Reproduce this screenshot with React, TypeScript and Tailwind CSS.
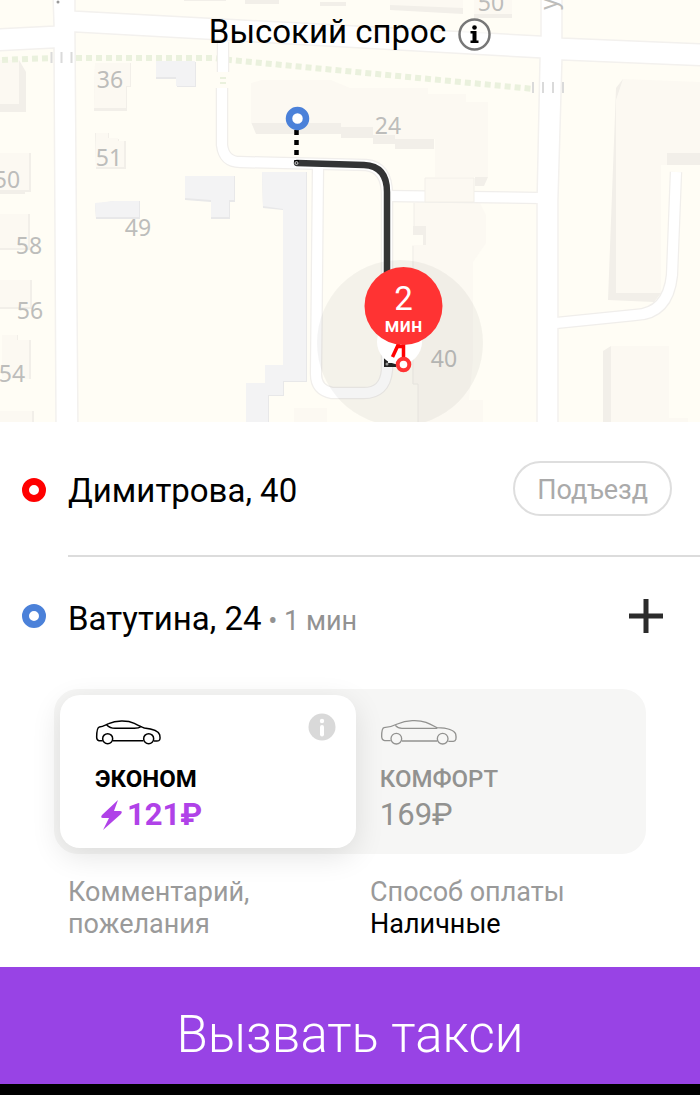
import { useState } from 'react';

const houses = [
  { label: '36', x: 110, y: 88 },
  { label: '51', x: 109, y: 166 },
  { label: '50', x: 7, y: 188 },
  { label: '49', x: 138, y: 236 },
  { label: '58', x: 29, y: 254 },
  { label: '56', x: 30, y: 319 },
  { label: '54', x: 12, y: 382 },
  { label: '24', x: 388, y: 134 },
  { label: '50', x: 491, y: 11 },
  { label: '40', x: 444, y: 367 },
];

const smallRoads = [
  'M223 42V72',
  'M222 88V145Q224 162 240 162L366 165Q387 167 387 195V370Q385 394 362 393H332Q316 390 316 374L318 168',
  'M387 196L540 198',
  'M556 323L635 315Q668 314 672 275L676 172',
];

const mainRoads = [
  'M-5 29L54 26L53 -5H75V11L541 36V-5H562V38L705 44V66L562 60L558 200V430H537V200L540 58L75 32L78 430H56L54 48L-5 51Z',
];

function Map() {
  return (
    <svg
      viewBox="0 0 700 422"
      preserveAspectRatio="xMidYMid slice"
      className="block w-full h-[422px] bg-[#fffdf5]"
      role="img"
      aria-label="Карта"
    >
      {/* walls */}
      <g fill="#f2efe9">
        <path d="M0 60H19L26 72V112H0Z" />
        <path d="M95 63H131V87H127V111H94Z" />
        <path d="M95 133H109V139H119V141H126V169H96Z" />
        <path d="M0 153H31V192H25V194H0Z" />
        <path d="M0 214H30V250H0Z" />
        <path d="M0 280H32V309H0Z" />
        <path d="M2 335H18V340H31V379H2Z" />
        <path d="M0 411H34V422H0Z" />
        <path d="M251 122L256 134H341V138H373V144H395V149H434V122Z" />
        <path d="M475 177H488L484 186H475Z" />
        <path d="M390 4H463V14L390 10Z" />
        <path d="M474 0H512V18H474Z" />
        <path d="M616 88L623 79V293H661L654 302L608 300Z" />
        <path d="M667 153H700V165H667Z" />
        <path d="M603 351L611 346V422H603Z" />
        <path d="M413 226H426V245H423V235H413Z" />
        <path d="M184 0H226V1H184Z" />
        <path d="M245 0H279V4H245ZM320 2H346V6H320Z" />
      </g>
      {/* roofs */}
      <g fill="#fcf9f2">
        <path d="M0 60H19V104H0Z" />
        <path d="M95 63H130V86H126V108H94Z" />
        <path d="M96 133H108V138H118V141H124V167H96Z" />
        <path d="M0 153H29V190H0Z" />
        <path d="M0 214H28V248H0Z" />
        <path d="M0 280H30V307H0Z" />
        <path d="M2 335H17V340H29V379H2Z" />
        <path d="M0 411H32V422H0Z" />
        <path d="M251 83L262 80H331L350 88H422L428 88V94H466V102H488V177H435V139H395V135H373V127H341V123H251Z" />
        <path d="M390 0H463V8L390 5Z" />
        <path d="M474 0H512V14H474Z" />
        <path d="M623 79L700 82V153H667V165H661V293H616V100Z" />
        <path d="M611 346H669V418H688V422H611Z" />
        <path d="M414 203H480L486 215V243L473 262V360L469 400H483V422H418V384H412V245H426V226H414Z" />
        <path d="M294 408H327V422H294Z" />
      </g>
      {/* sheds */}
      <g fill="#e8e8e9">
        <path d="M156 62H196V87H177V79H156Z" />
        <path d="M95 204L114 201H140V219H96Z" />
        <path d="M185 176H235V202H230V219H211V202L185 200Z" />
        <path d="M262 172H307V382H284V396H269V422H246V384H265V365H283V210L263 208Z" />
      </g>
      <g fill="#f3f3f4">
        <path d="M156 61H195V86H176V77H156Z" />
        <path d="M95 203L114 201H139V217H96Z" />
        <path d="M185 176H234V200H229V217H211V200L185 198Z" />
        <path d="M262 172H306V381H283V395H268V422H246V383H265V365H283V209L263 206Z" />
      </g>

      <path d="M2 60L52 58M76 58H213L230 60L534 89" fill="none" stroke="#eaf1dd" strokeWidth="6" strokeDasharray="6 4" />

      <g fill="none" stroke="#f0eeeb" strokeWidth="12.5">
        {smallRoads.map((d) => (
          <path key={d} d={d} />
        ))}
      </g>
      {mainRoads.map((d) => (
        <path key={d} d={d} fill="#fff" stroke="#f3f1ee" strokeWidth="1.5" />
      ))}
      <g fill="none" stroke="#fff" strokeWidth="10">
        {smallRoads.map((d) => (
          <path key={d} d={d} />
        ))}
      </g>
      <path d="M425 178H474V202H425Z" fill="#fcf9f2" stroke="#f2efe9" />
      <path d="M51.500 52V63M61.500 52V63M71.500 52V63M533 82V93M543 82V93M553 82V93M563 82V93" stroke="#dadada" strokeWidth="2" />
      <path d="M220 78H226M220 83H226" stroke="#eaf1dd" strokeWidth="2" />
      <path d="M414 203V226M413 246V384H418V422" fill="none" stroke="#f0eee8" />

      <g fill="#bdbdbb" className="font-['Noto_Sans'] text-[23px]" textAnchor="middle">
        {houses.map(({ label, x, y }) => (
          <text key={`${label}-${x}`} x={x} y={y}>
            {label}
          </text>
        ))}
        <text x="0" y="0" transform="translate(557 4) rotate(-90)">
          у
        </text>
      </g>
      <circle cx="58" cy="2" r="1.500" fill="#999" />

      {/* route */}
      <circle cx="400" cy="343" r="83" fill="#000" fillOpacity="0.045" />
      <path d="M297 163L364 165Q387 166 387 192V285" fill="none" stroke="#333435" strokeWidth="6.500" strokeLinecap="round" />
      <path d="M296.500 130V163" stroke="#000" strokeWidth="4.500" strokeDasharray="5 5" />
      <circle cx="296.500" cy="163" r="1.500" fill="#333" stroke="#eee" strokeWidth="0.800" />
      <circle cx="297.500" cy="118.500" r="8.500" fill="#fff" stroke="#4b81d9" strokeWidth="6.500" />

      {/* pickup pin */}
      <path d="M386 358V365H396" fill="none" stroke="#222" strokeWidth="4" />
      <circle cx="387" cy="364" r="1.500" fill="#999" />
      <circle cx="399.500" cy="342" r="22.500" fill="#fff" />
      <path d="M399 343L392.500 357" stroke="#f00" strokeWidth="3.500" />
      <path d="M396 346.500H403M403.500 340V360" stroke="#f00" strokeWidth="3.500" />
      <circle cx="403.500" cy="364.500" r="5.800" fill="#fff" stroke="#f33" strokeWidth="4" />
      <circle cx="403.500" cy="306" r="39" fill="#f33" />
      <g fill="#fff" textAnchor="middle" className="font-[Roboto]">
        <text x="403.500" y="310" className="text-[33px]">
          2
        </text>
        <text x="403.500" y="332" className="text-[20px] font-medium">
          мин
        </text>
      </g>
    </svg>
  );
}

function Ring({ color }: { color: string }) {
  return (
    <svg viewBox="0 0 24 24" className={`size-6 shrink-0 ${color}`} aria-hidden="true">
      <circle cx="12" cy="12" r="8.500" fill="none" stroke="currentColor" strokeWidth="7" />
    </svg>
  );
}

function EconomyCar() {
  return (
    <svg viewBox="0 0 201 78" className="w-[67px] h-[26px]" fill="none" stroke="currentColor" strokeWidth="4.500" strokeLinejoin="round" aria-hidden="true">
      <path d="M23 65H12Q5 64 5 55C5 37 8 25 13 24C25 23 31 18 41 14C62 4 97 3 118 13C132 20 140 24 148 27C174 30 190 35 194 47C197 62 194 66 186 66H177M54 65H145" />
      <path d="M35 18C44 27 50 28 60 28H118C128 28 134 26 139 22" />
      <circle cx="38" cy="59" r="15" />
      <circle cx="161" cy="59" r="15" />
    </svg>
  );
}

function ComfortCar() {
  return (
    <svg viewBox="0 0 234 78" className="w-[78px] h-[26px]" fill="none" stroke="currentColor" strokeWidth="4" strokeLinejoin="round" aria-hidden="true">
      <path d="M32 65H14Q5 64 5 52C5 37 8 27 12 26C30 25 40 21 52 15C80 3 115 2 138 10C153 16 163 22 171 26C202 27 222 33 227 45C230 60 228 66 220 67H205M66 66H172" />
      <path d="M46 19C54 28 59 28 66 28H172" />
      <circle cx="49" cy="59" r="16" />
      <circle cx="188" cy="59" r="16" />
    </svg>
  );
}

export default function App() {
  const [tariff, setTariff] = useState('econom');

  const cardStyle = (name: string) =>
    tariff === name
      ? 'bg-white text-black shadow-[0_8px_30px_rgba(0,0,0,0.11)]'
      : 'text-[#929290]';

  return (
    <div className="min-h-screen flex flex-col bg-white text-black font-[Roboto,sans-serif]">
      <header className="relative">
        <Map />
        <div className="absolute inset-x-0 top-3 flex items-center justify-center gap-3">
          <h1 className="text-[33px] leading-10">Высокий спрос</h1>
          <button type="button" aria-label="О спросе" className="mt-1">
            <svg viewBox="0 0 33 33" className="size-[33px]" aria-hidden="true">
              <circle cx="16.500" cy="16.500" r="15" fill="#fff" fillOpacity="0.5" stroke="#777" strokeWidth="2.500" />
              <circle cx="16.500" cy="9.500" r="2.300" />
              <path d="M12.500 13H18.500V22.500H20.500V25H12.500V22.500H14.500V15.500H12.500Z" />
            </svg>
          </button>
        </div>
      </header>

      <main className="grow flex flex-col">
        <section className="pl-[22px]">
          <div className="flex items-center">
            <Ring color="text-[#f00]" />
            <div className="ml-[22px] grow flex items-center justify-between h-[135px] pr-7 border-b-2 border-[#dcdcdc]">
              <p className="pt-1 text-[33px] leading-10">Димитрова, 40</p>
              <button type="button" className="h-[55px] px-[22px] pt-1 rounded-full border-2 border-[#dedede] text-[27px] text-[#aaa]">
                Подъезд
              </button>
            </div>
          </div>
          <div className="flex items-center h-[118px] pr-9">
            <Ring color="text-[#4b81d9]" />
            <p className="ml-[22px] pt-2 grow text-[33px] leading-10">
              Ватутина, 24
              <span className="text-[27px] text-[#929292]"> • 1 мин</span>
            </p>
            <button type="button" aria-label="Добавить адрес">
              <svg viewBox="0 0 36 36" className="size-9" stroke="#2b2b2b" strokeWidth="5" aria-hidden="true">
                <path d="M1 18H35M18 1V35" />
              </svg>
            </button>
          </div>
        </section>

        <section className="mt-[14px] mx-[54px] p-[6px] flex rounded-3xl bg-[#f6f6f5]">
          <div className="relative w-[51%]">
            <button
              type="button"
              aria-pressed={tariff === 'econom'}
              onClick={() => setTariff('econom')}
              className={`w-full h-[153px] px-[35px] pt-6 flex flex-col items-start rounded-[20px] ${cardStyle('econom')}`}
            >
              <EconomyCar />
              <span className="mt-[18px] text-[24px] leading-8 font-bold">ЭКОНОМ</span>
              <span className="pl-1 flex items-center text-[31px] leading-10 font-bold text-[#b042e8]">
                <svg viewBox="0 0 24 32" className="w-6 h-8" fill="currentColor" aria-hidden="true">
                  <path d="M19 1L3 16Q1 19 4 19L10 19L4 31L22 15Q24 12 21 12L15 12Z" />
                </svg>
                <span className="ml-1">121₽</span>
              </span>
            </button>
            <button type="button" aria-label="О тарифе" className="absolute top-[18px] right-5">
              <svg viewBox="0 0 28 28" className="size-7" aria-hidden="true">
                <circle cx="14" cy="14" r="13.500" fill="#d9d9d9" />
                <circle cx="14" cy="8" r="2.200" fill="#fff" />
                <path d="M14 14V21.500" stroke="#fff" strokeWidth="4" strokeLinecap="round" />
              </svg>
            </button>
          </div>
          <button
            type="button"
            aria-pressed={tariff === 'comfort'}
            onClick={() => setTariff('comfort')}
            className={`w-[49%] h-[153px] px-6 pt-6 flex flex-col items-start rounded-[20px] ${cardStyle('comfort')}`}
          >
            <ComfortCar />
            <span className="mt-[18px] text-[24px] leading-8 font-medium">КОМФОРТ</span>
            <span className="text-[31px] leading-10">169₽</span>
          </button>
        </section>

        <section className="mt-[22px] mb-[27px] pl-[68px] pr-7 grid grid-cols-2 text-[27px] leading-8 text-[#9a9a9a]">
          <button type="button" className="flex justify-start items-start text-left">
            Комментарий,
            <br />
            пожелания
          </button>
          <button type="button" className="flex flex-col items-start">
            <span>Способ оплаты</span>
            <span className="text-black">Наличные</span>
          </button>
        </section>
      </main>

      <button type="button" className="h-[117px] pt-5 bg-[#9843e5] text-white text-[51px] font-light">
        Вызвать такси
      </button>
      <div className="h-[11px] bg-black" />
    </div>
  );
}
